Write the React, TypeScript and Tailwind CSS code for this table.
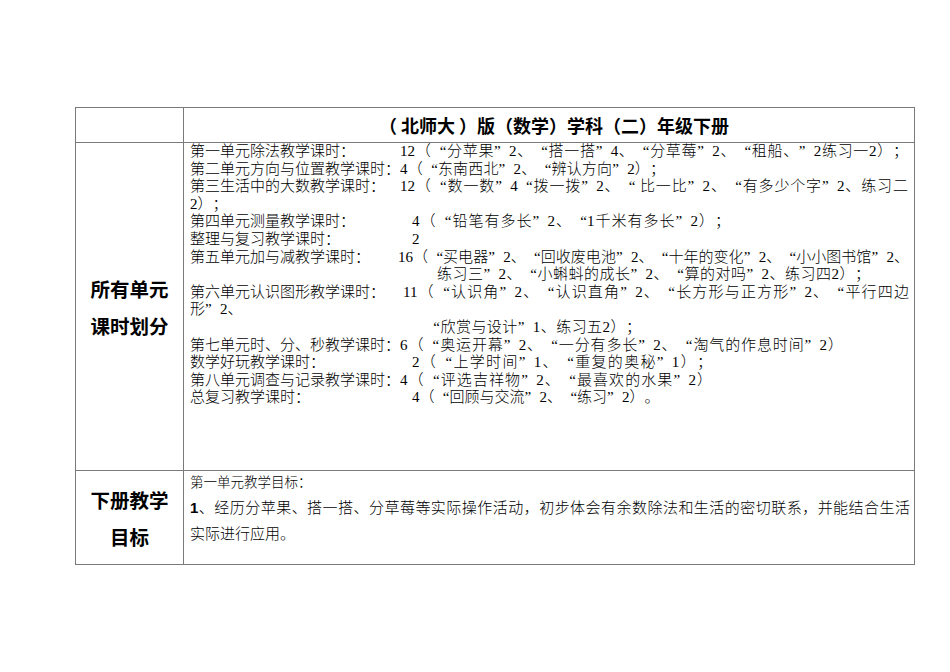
import React from "react";

function Rich({ t }: { t: string }) {
  const parts = t.split(/([“”])/);
  return (
    <>
      {parts.map((p, i) =>
        p === "“" ? (
          <span key={i} className="inline-block w-[1em] text-right [text-align-last:right]">“</span>
        ) : p === "”" ? (
          <span key={i} className="inline-block w-[1em] text-left [text-align-last:left]">”</span>
        ) : (
          <span key={i}>{p}</span>
        )
      )}
    </>
  );
}

function Line({ lw, cw, label, t, j = true }: { lw: string; cw: string; label?: string; t: string; j?: boolean }) {
  return (
    <div className="flex h-[17.6px]">
      <div className={`${lw} shrink-0 whitespace-nowrap`}>{label}</div>
      <div className={j ? `${cw} shrink-0 [text-align-last:justify]` : `${cw} shrink-0 whitespace-nowrap`}>
        <Rich t={t} />
      </div>
    </div>
  );
}

export default function App() {
  return (
    <div
      lang="zh-CN"
      className="w-[950px] h-[672px] bg-white pt-[107px] pl-[75px] text-black [text-spacing-trim:space-all] [font-family:'Liberation_Serif','Noto_Sans_CJK_SC',serif]"
    >
      <div className="w-[840px] grid grid-cols-[108px_731px] border-t border-l border-[#7a7a7a]">
        {/* header row */}
        <div className="h-[35px] border-r border-b border-[#7a7a7a]" />
        <div className="h-[35px] border-r border-b border-[#7a7a7a] flex items-center justify-center pl-[10px] text-[18px] font-bold whitespace-pre [font-family:'Noto_Sans_CJK_SC',sans-serif]">
          （ 北师大 ）版（数学）学科（二）年级下册
        </div>

        {/* row 2 */}
        <div className="h-[328px] border-r border-b border-[#7a7a7a] flex flex-col items-center justify-center text-[19.5px] leading-[37px] font-bold [font-family:'Noto_Sans_CJK_SC',sans-serif]">
          <div>所有单元</div>
          <div>课时划分</div>
        </div>
        <div className="h-[328px] border-r border-b border-[#7a7a7a] pl-[6px] pt-0 flex flex-col text-[15px] leading-[17.6px] font-light">
          <Line lw="w-[210px]" cw="w-[508px]" label="第一单元除法教学课时：" t="12（“分苹果”2、“搭一搭”4、“分草莓”2、“租船、”2练习一2）；" />
          <Line lw="w-[210px]" cw="w-[265px]" label="第二单元方向与位置教学课时：" t="4（“东南西北”2、“辨认方向”2）；" />
          <Line lw="w-[210px]" cw="w-[508px]" label="第三生活中的大数教学课时：" t="12（“数一数”4“拨一拨”2、“ 比一比”2、“有多少个字”2、练习二" />
          <Line lw="w-0" cw="w-auto" t="2）；" j={false} />
          <Line lw="w-[222px]" cw="w-[318px]" label="第四单元测量教学课时：" t="4（“铅笔有多长”2、“1千米有多长”2）；" />
          <Line lw="w-[222px]" cw="w-auto" label="整理与复习教学课时：" t="2" j={false} />
          <Line lw="w-[208px]" cw="w-[511px]" label="第五单元加与减教学课时：" t="16（“买电器”2、“回收废电池”2、“十年的变化”2、“小小图书馆”2、" />
          <Line lw="w-[247px]" cw="w-[433px]" t="练习三”2、“小蝌蚪的成长”2、“算的对吗”2、练习四2）；" />
          <Line lw="w-[213px]" cw="w-[506px]" label="第六单元认识图形教学课时：" t="11（“认识角”2、“认识直角”2、“长方形与正方形”2、“平行四边" />
          <Line lw="w-0" cw="w-auto" t="形”2、" j={false} />
          <Line lw="w-[235px]" cw="w-[216px]" t="“欣赏与设计”1、练习五2）；" />
          <Line lw="w-[210px]" cw="w-[443px]" label="第七单元时、分、秒教学课时：" t="6（“奥运开幕”2、“一分有多长”2、“淘气的作息时间”2）" />
          <Line lw="w-[222px]" cw="w-[300px]" label="数学好玩教学课时：" t="2（“上学时间”1、“重复的奥秘”1）；" />
          <Line lw="w-[210px]" cw="w-[312px]" label="第八单元调查与记录教学课时：" t="4（“评选吉祥物”2、“最喜欢的水果”2）" />
          <Line lw="w-[222px]" cw="w-auto" label="总复习教学课时：" t="4（“回顾与交流”2、“练习”2）。" j={false} />
        </div>

        {/* row 3 */}
        <div className="h-[94px] border-r border-b border-[#7a7a7a] flex flex-col items-center justify-center text-[19.5px] leading-[37px] font-bold [font-family:'Noto_Sans_CJK_SC',sans-serif]">
          <div>下册教学</div>
          <div>目标</div>
        </div>
        <div className="h-[94px] border-r border-b border-[#7a7a7a] pl-[6px] flex flex-col [font-family:'Noto_Sans_CJK_SC',sans-serif] font-light">
          <div className="h-[23px] leading-[20px] text-[13.5px] whitespace-nowrap">第一单元教学目标：</div>
          <div className="h-[26px] leading-[26px] text-[15px] w-[720px] [text-align-last:justify]">
            <span className="font-bold [font-family:'Liberation_Sans',sans-serif]">1</span>、经历分苹果、搭一搭、分草莓等实际操作活动，初步体会有余数除法和生活的密切联系，并能结合生活
          </div>
          <div className="h-[26px] leading-[26px] text-[15px] whitespace-nowrap">实际进行应用。</div>
        </div>
      </div>
    </div>
  );
}
